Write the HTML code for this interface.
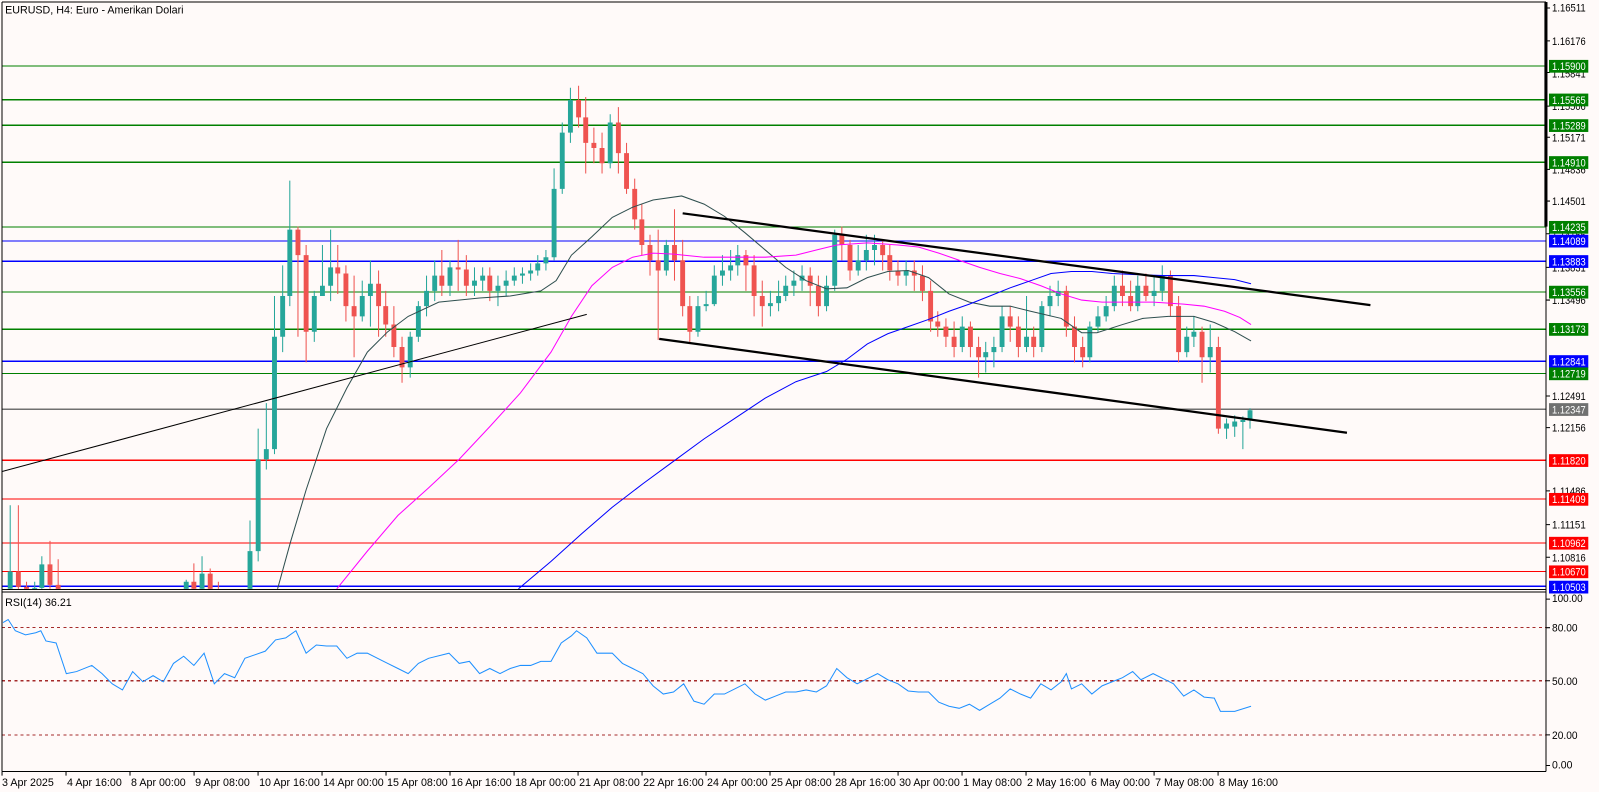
<!DOCTYPE html>
<html><head><meta charset="utf-8"><style>
html,body{margin:0;padding:0;background:#FFFAF9;overflow:hidden}
svg{display:block}
text{font-family:"Liberation Sans",sans-serif;font-size:10.5px;fill:#000}
.lb{fill:#fff}
</style></head><body>
<svg width="1599" height="792" viewBox="0 0 1567 776" preserveAspectRatio="none" xmlns="http://www.w3.org/2000/svg">
<defs><clipPath id="cm"><rect x="2" y="2" width="1513" height="575"/></clipPath>
<clipPath id="cr"><rect x="2" y="580" width="1513" height="176"/></clipPath></defs>
<rect width="1567" height="776" fill="#FFFAF9"/>
<g stroke-width="1.2" shape-rendering="crispEdges">
<line x1="2" x2="1515" y1="64.7" y2="64.7" stroke="#008000"/>
<line x1="2" x2="1515" y1="97.7" y2="97.7" stroke="#008000"/>
<line x1="2" x2="1515" y1="122.8" y2="122.8" stroke="#008000"/>
<line x1="2" x2="1515" y1="159" y2="159" stroke="#008000"/>
<line x1="2" x2="1515" y1="222.5" y2="222.5" stroke="#008000"/>
<line x1="2" x2="1515" y1="236" y2="236" stroke="#0000ff"/>
<line x1="2" x2="1515" y1="256" y2="256" stroke="#0000ff"/>
<line x1="2" x2="1515" y1="286" y2="286" stroke="#008000"/>
<line x1="2" x2="1515" y1="322.5" y2="322.5" stroke="#008000"/>
<line x1="2" x2="1515" y1="354" y2="354" stroke="#0000ff"/>
<line x1="2" x2="1515" y1="366" y2="366" stroke="#008000"/>
<line x1="2" x2="1515" y1="401" y2="401" stroke="#707070"/>
<line x1="2" x2="1515" y1="451" y2="451" stroke="#ff0000"/>
<line x1="2" x2="1515" y1="489" y2="489" stroke="#ff0000"/>
<line x1="2" x2="1515" y1="532" y2="532" stroke="#ff0000"/>
<line x1="2" x2="1515" y1="560" y2="560" stroke="#ff0000"/>
<line x1="2" x2="1515" y1="574.5" y2="574.5" stroke="#0000ff"/>
</g>
<g clip-path="url(#cm)">
<path fill="none" stroke="#26A69A" stroke-width="1" d="M10 495V577M34 570V585M41 545V580M182.5 568V600M198 545V580M245 510V600M253 420V550M261 395V460M269 290V445M277 260V345M284 177V300M308 285V335M316 240V290M324 225V295M355 275V315M363 255V320M402 325V370M410 295V335M418 270V310M426 255V295M441 255V290M465 262V290M473 262V285M488 270V300M496 265V290M504 262V280M512 262V278M520 258V275M527 250V270M535 245V265M543 165V255M551 120V190M559 86V140M598 112V165M653 235V270M684 290V330M692 285V305M700 260V300M708 250V280M716 245V275M723 240V270M755 285V310M763 275V305M770 270V295M778 265V290M786 260V285M810 270V305M818 225V285M841 240V270M849 230V265M857 230V260M888 255V280M943 310V345M966 335V365M974 330V360M982 300V345M1006 290V345M1021 295V345M1029 280V310M1037 275V300M1068 315V355M1076 300V325M1084 290V315M1092 270V305M1115 270V305M1131 270V300M1139 260V295M1163 320V350M1170 310V340M1186 318V365M1202 410V430M1210 407V428M1218 408V440M1225 400V420"/>
<path fill="#26A69A" d="M7.6 560h4.8V577h-4.8zM31.6 576h4.8V583h-4.8zM38.6 553h4.8V576h-4.8zM180.1 570h4.8V600h-4.8zM195.6 562h4.8V577h-4.8zM242.6 540h4.8V600h-4.8zM250.6 450h4.8V540h-4.8zM258.6 440h4.8V450h-4.8zM266.6 330h4.8V440h-4.8zM274.6 290h4.8V330h-4.8zM281.6 225h4.8V290h-4.8zM305.6 290h4.8V325h-4.8zM313.6 280h4.8V290h-4.8zM321.6 262h4.8V280h-4.8zM352.6 290h4.8V310h-4.8zM360.6 278h4.8V290h-4.8zM399.6 330h4.8V360h-4.8zM407.6 300h4.8V330h-4.8zM415.6 285h4.8V300h-4.8zM423.6 270h4.8V285h-4.8zM438.6 262h4.8V280h-4.8zM462.6 275h4.8V280h-4.8zM470.6 270h4.8V275h-4.8zM485.6 280h4.8V285h-4.8zM493.6 275h4.8V280h-4.8zM501.6 270h4.8V275h-4.8zM509.6 268h4.8V270h-4.8zM517.6 265h4.8V268h-4.8zM524.6 258h4.8V265h-4.8zM532.6 252h4.8V258h-4.8zM540.6 185h4.8V252h-4.8zM548.6 130h4.8V185h-4.8zM556.6 98h4.8V130h-4.8zM595.6 120h4.8V160h-4.8zM650.6 240h4.8V265h-4.8zM681.6 300h4.8V325h-4.8zM689.6 298h4.8V300h-4.8zM697.6 270h4.8V298h-4.8zM705.6 265h4.8V270h-4.8zM713.6 260h4.8V265h-4.8zM720.6 250h4.8V260h-4.8zM752.6 297h4.8V300h-4.8zM760.6 290h4.8V297h-4.8zM767.6 280h4.8V290h-4.8zM775.6 275h4.8V280h-4.8zM783.6 270h4.8V275h-4.8zM807.6 280h4.8V300h-4.8zM815.6 230h4.8V280h-4.8zM838.6 255h4.8V265h-4.8zM846.6 245h4.8V255h-4.8zM854.6 240h4.8V245h-4.8zM885.6 265h4.8V270h-4.8zM940.6 320h4.8V340h-4.8zM963.6 345h4.8V350h-4.8zM971.6 340h4.8V345h-4.8zM979.6 310h4.8V340h-4.8zM1003.6 330h4.8V340h-4.8zM1018.6 300h4.8V340h-4.8zM1026.6 290h4.8V300h-4.8zM1034.6 285h4.8V290h-4.8zM1065.6 320h4.8V350h-4.8zM1073.6 310h4.8V320h-4.8zM1081.6 300h4.8V310h-4.8zM1089.6 280h4.8V300h-4.8zM1112.6 280h4.8V300h-4.8zM1128.6 285h4.8V290h-4.8zM1136.6 270h4.8V285h-4.8zM1160.6 330h4.8V345h-4.8zM1167.6 325h4.8V330h-4.8zM1183.6 340h4.8V350h-4.8zM1199.6 415h4.8V420h-4.8zM1207.6 413h4.8V418h-4.8zM1215.6 411.5h4.8V413.5h-4.8zM1222.6 402h4.8V412h-4.8z"/>
<path fill="none" stroke="#EF5350" stroke-width="1" d="M18 495V578M26 570V585M49 530V577M57 548V600M190 552V580M206 557V580M214 570V600M292 222V330M300 240V355M331 240V288M339 260V315M347 270V350M371 265V330M378 285V330M386 300V350M394 330V375M433 245V290M449 235V285M457 250V290M480 262V295M567 84V125M574 95V170M582 125V160M590 130V170M606 105V170M614 140V190M622 175V225M629 200V250M637 230V270M645 225V333M661 205V275M669 235V310M676 290V335M731 245V285M739 250V310M747 275V320M794 262V300M802 270V310M825 222V255M833 235V275M865 235V265M872 240V275M880 255V280M896 255V285M904 260V295M912 275V325M919 305V330M927 312V340M935 315V350M951 315V350M959 330V370M990 300V335M998 310V350M1013 320V350M1045 280V330M1053 310V355M1061 330V360M1100 265V300M1108 275V305M1123 268V295M1147 265V310M1155 290V355M1178 320V375M1194 330V425"/>
<path fill="#EF5350" d="M15.6 560h4.8V575h-4.8zM23.6 575h4.8V583h-4.8zM46.6 553h4.8V573h-4.8zM54.6 573h4.8V593h-4.8zM187.6 570h4.8V577h-4.8zM203.6 562h4.8V578h-4.8zM211.6 580h4.8V600h-4.8zM289.6 225h4.8V250h-4.8zM297.6 250h4.8V325h-4.8zM328.6 262h4.8V268h-4.8zM336.6 268h4.8V300h-4.8zM344.6 300h4.8V310h-4.8zM368.6 278h4.8V300h-4.8zM375.6 300h4.8V318h-4.8zM383.6 318h4.8V340h-4.8zM391.6 340h4.8V360h-4.8zM430.6 270h4.8V280h-4.8zM446.6 262h4.8V264h-4.8zM454.6 264h4.8V280h-4.8zM477.6 270h4.8V285h-4.8zM564.6 98h4.8V115h-4.8zM571.6 115h4.8V140h-4.8zM579.6 140h4.8V145h-4.8zM587.6 145h4.8V160h-4.8zM603.6 120h4.8V150h-4.8zM611.6 150h4.8V185h-4.8zM619.6 185h4.8V215h-4.8zM626.6 215h4.8V240h-4.8zM634.6 240h4.8V255h-4.8zM642.6 255h4.8V265h-4.8zM658.6 240h4.8V255h-4.8zM666.6 255h4.8V300h-4.8zM673.6 300h4.8V325h-4.8zM728.6 250h4.8V260h-4.8zM736.6 260h4.8V290h-4.8zM744.6 290h4.8V300h-4.8zM791.6 270h4.8V280h-4.8zM799.6 280h4.8V300h-4.8zM822.6 230h4.8V240h-4.8zM830.6 240h4.8V265h-4.8zM862.6 240h4.8V250h-4.8zM869.6 250h4.8V265h-4.8zM877.6 265h4.8V270h-4.8zM893.6 265h4.8V270h-4.8zM901.6 270h4.8V285h-4.8zM909.6 285h4.8V315h-4.8zM916.6 315h4.8V320h-4.8zM924.6 320h4.8V330h-4.8zM932.6 330h4.8V340h-4.8zM948.6 320h4.8V340h-4.8zM956.6 340h4.8V350h-4.8zM987.6 310h4.8V320h-4.8zM995.6 320h4.8V340h-4.8zM1010.6 330h4.8V340h-4.8zM1042.6 285h4.8V320h-4.8zM1050.6 320h4.8V340h-4.8zM1058.6 340h4.8V350h-4.8zM1097.6 280h4.8V290h-4.8zM1105.6 290h4.8V300h-4.8zM1120.6 280h4.8V290h-4.8zM1144.6 270h4.8V300h-4.8zM1152.6 300h4.8V345h-4.8zM1175.6 325h4.8V350h-4.8zM1191.6 340h4.8V420h-4.8z"/>
</g>
<g clip-path="url(#cm)" fill="none">
<polyline stroke="#2F4F4F" stroke-width="1" points="272,577 285,530 300,480 320,420 340,380 360,345 380,325 400,310 430,296 470,292 500,290 530,285 545,275 560,250 580,232 600,213 620,203 640,196 668,192 690,200 710,212 730,228 750,245 770,262 790,275 810,283 830,282 850,272 870,266 890,265 910,272 930,288 950,296 970,300 990,300 1010,305 1040,312 1060,326 1075,326 1100,318 1120,312 1145,310 1170,310 1190,316 1210,325 1226,334"/>
<polyline stroke="#FF00FF" stroke-width="1" points="330,577 360,540 390,505 420,478 450,450 480,418 510,385 540,345 560,310 580,280 600,262 620,252 640,248 660,249 690,252 720,252 750,252 780,250 800,245 820,240 850,238 880,240 900,242 920,248 940,255 960,262 980,268 1000,273 1020,280 1040,288 1060,294 1080,296 1100,296 1130,296 1160,298 1180,300 1200,305 1215,311 1226,318"/>
<polyline stroke="#0000FF" stroke-width="1" points="508,577 540,550 570,523 600,497 630,474 660,452 690,430 720,410 750,390 780,374 810,364 830,352 850,337 870,327 890,320 910,313 930,305 950,298 970,290 990,282 1010,275 1030,268 1050,266 1070,266 1090,268 1110,269 1140,270 1170,270 1190,272 1210,274 1226,278"/>
<line x1="2" y1="462" x2="575" y2="308" stroke="#000" stroke-width="1"/>
<line x1="669" y1="209" x2="1343" y2="299" stroke="#000" stroke-width="2.2"/>
<line x1="646" y1="332" x2="1320" y2="424" stroke="#000" stroke-width="2.2"/>
</g>
<g stroke="#A52A2A" stroke-width="1" stroke-dasharray="3,3" shape-rendering="crispEdges">
<line x1="2" x2="1515" y1="615" y2="615"/><line x1="2" x2="1515" y1="667" y2="667"/><line x1="2" x2="1515" y1="720" y2="720"/>
</g>
<polyline clip-path="url(#cr)" fill="none" stroke="#1E90FF" stroke-width="1" points="3,610 8,607 15,618 25,622 35,620 40,618 45,628 55,630 65,660 75,658 90,652 100,660 110,670 120,676 130,658 140,668 150,662 160,668 170,650 180,643 190,652 200,640 210,670 220,660 230,664 240,645 260,638 270,627 280,625 290,618 300,640 310,632 320,633 330,633 340,645 350,640 360,640 370,645 380,650 390,655 400,660 410,650 420,645 440,640 450,650 460,648 470,660 480,655 490,660 500,655 510,652 520,652 530,648 540,648 550,630 560,623 565,618 575,625 585,640 600,640 610,650 620,655 630,660 640,672 650,680 660,678 670,670 680,687 690,690 700,680 710,680 720,675 730,670 740,680 750,686 760,682 770,678 780,678 790,676 800,678 810,672 820,655 830,664 840,670 850,665 860,660 870,666 880,670 890,677 900,678 910,678 920,688 930,692 940,694 950,690 960,696 970,690 980,684 990,675 1000,680 1010,684 1020,670 1030,676 1040,668 1045,660 1050,675 1060,670 1070,680 1080,672 1090,668 1100,664 1110,658 1118,666 1130,660 1140,665 1150,670 1160,682 1170,676 1180,683 1190,684 1196,697 1210,697 1226,692"/>
<g fill="none" stroke="#000" stroke-width="1" shape-rendering="crispEdges">
<line x1="2" y1="2" x2="1515" y2="2"/>
<line x1="2" y1="2" x2="2" y2="756"/>
<line x1="1515" y1="2" x2="1515" y2="756"/>
<line x1="2" y1="577.5" x2="1515" y2="577.5"/>
<line x1="2" y1="580" x2="1515" y2="580"/>
<line x1="2" y1="756" x2="1515" y2="756"/>
</g>
<rect x="1513.5" y="2" width="3" height="220" fill="#000"/>
<text x="5" y="13">EURUSD, H4:  Euro - Amerikan Dolari</text>
<text x="5" y="594">RSI(14) 36.21</text>
<path stroke="#000" stroke-width="1" d="M1515 7.8h4M1515 40h4M1515 71h4M1515 104h4M1515 134.5h4M1515 166h4M1515 197h4M1515 229h4M1515 262h4M1515 294h4M1515 388h4M1515 419h4M1515 481h4M1515 514h4M1515 546h4M1515 587h4M1515 615h4M1515 667h4M1515 720h4M1515 750h4"/>
<g>
<text x="1521" y="11.5" textLength="33" lengthAdjust="spacingAndGlyphs">1.16511</text>
<text x="1521" y="44" textLength="33" lengthAdjust="spacingAndGlyphs">1.16176</text>
<text x="1521" y="76" textLength="33" lengthAdjust="spacingAndGlyphs">1.15841</text>
<text x="1521" y="108" textLength="33" lengthAdjust="spacingAndGlyphs">1.15506</text>
<text x="1521" y="138.5" textLength="33" lengthAdjust="spacingAndGlyphs">1.15171</text>
<text x="1521" y="170" textLength="33" lengthAdjust="spacingAndGlyphs">1.14836</text>
<text x="1521" y="201" textLength="33" lengthAdjust="spacingAndGlyphs">1.14501</text>
<text x="1521" y="234" textLength="33" lengthAdjust="spacingAndGlyphs">1.14166</text>
<text x="1521" y="266" textLength="33" lengthAdjust="spacingAndGlyphs">1.13831</text>
<text x="1521" y="298" textLength="33" lengthAdjust="spacingAndGlyphs">1.13496</text>
<text x="1521" y="392" textLength="33" lengthAdjust="spacingAndGlyphs">1.12491</text>
<text x="1521" y="423" textLength="33" lengthAdjust="spacingAndGlyphs">1.12156</text>
<text x="1521" y="485" textLength="33" lengthAdjust="spacingAndGlyphs">1.11486</text>
<text x="1521" y="518" textLength="33" lengthAdjust="spacingAndGlyphs">1.11151</text>
<text x="1521" y="550" textLength="33" lengthAdjust="spacingAndGlyphs">1.10816</text>
<text x="1521" y="590" textLength="30" lengthAdjust="spacingAndGlyphs">100.00</text>
<text x="1521" y="619" textLength="25" lengthAdjust="spacingAndGlyphs">80.00</text>
<text x="1521" y="671" textLength="25" lengthAdjust="spacingAndGlyphs">50.00</text>
<text x="1521" y="724" textLength="25" lengthAdjust="spacingAndGlyphs">20.00</text>
<text x="1521" y="753" textLength="20" lengthAdjust="spacingAndGlyphs">0.00</text>
</g>
<g>
<rect x="1518" y="58.7" width="38.5" height="12.5" fill="#008000"/><text class="lb" x="1521" y="68.7" textLength="33" lengthAdjust="spacingAndGlyphs">1.15900</text>
<rect x="1518" y="91.7" width="38.5" height="12.5" fill="#008000"/><text class="lb" x="1521" y="101.7" textLength="33" lengthAdjust="spacingAndGlyphs">1.15565</text>
<rect x="1518" y="116.8" width="38.5" height="12.5" fill="#008000"/><text class="lb" x="1521" y="126.8" textLength="33" lengthAdjust="spacingAndGlyphs">1.15289</text>
<rect x="1518" y="153" width="38.5" height="12.5" fill="#008000"/><text class="lb" x="1521" y="163" textLength="33" lengthAdjust="spacingAndGlyphs">1.14910</text>
<rect x="1518" y="216.5" width="38.5" height="12.5" fill="#008000"/><text class="lb" x="1521" y="226.5" textLength="33" lengthAdjust="spacingAndGlyphs">1.14235</text>
<rect x="1518" y="230" width="38.5" height="12.5" fill="#0000ff"/><text class="lb" x="1521" y="240" textLength="33" lengthAdjust="spacingAndGlyphs">1.14089</text>
<rect x="1518" y="250" width="38.5" height="12.5" fill="#0000ff"/><text class="lb" x="1521" y="260" textLength="33" lengthAdjust="spacingAndGlyphs">1.13883</text>
<rect x="1518" y="280" width="38.5" height="12.5" fill="#008000"/><text class="lb" x="1521" y="290" textLength="33" lengthAdjust="spacingAndGlyphs">1.13556</text>
<rect x="1518" y="316.5" width="38.5" height="12.5" fill="#008000"/><text class="lb" x="1521" y="326.5" textLength="33" lengthAdjust="spacingAndGlyphs">1.13173</text>
<rect x="1518" y="348" width="38.5" height="12.5" fill="#0000ff"/><text class="lb" x="1521" y="358" textLength="33" lengthAdjust="spacingAndGlyphs">1.12841</text>
<rect x="1518" y="360" width="38.5" height="12.5" fill="#008000"/><text class="lb" x="1521" y="370" textLength="33" lengthAdjust="spacingAndGlyphs">1.12719</text>
<rect x="1518" y="395" width="38.5" height="12.5" fill="#707070"/><text class="lb" x="1521" y="405" textLength="33" lengthAdjust="spacingAndGlyphs">1.12347</text>
<rect x="1518" y="445" width="38.5" height="12.5" fill="#ff0000"/><text class="lb" x="1521" y="455" textLength="33" lengthAdjust="spacingAndGlyphs">1.11820</text>
<rect x="1518" y="483" width="38.5" height="12.5" fill="#ff0000"/><text class="lb" x="1521" y="493" textLength="33" lengthAdjust="spacingAndGlyphs">1.11409</text>
<rect x="1518" y="526" width="38.5" height="12.5" fill="#ff0000"/><text class="lb" x="1521" y="536" textLength="33" lengthAdjust="spacingAndGlyphs">1.10962</text>
<rect x="1518" y="554" width="38.5" height="12.5" fill="#ff0000"/><text class="lb" x="1521" y="564" textLength="33" lengthAdjust="spacingAndGlyphs">1.10670</text>
<rect x="1518" y="569" width="38.5" height="12.5" fill="#0000ff"/><text class="lb" x="1521" y="579" textLength="33" lengthAdjust="spacingAndGlyphs">1.10503</text>
</g>
<path stroke="#000" stroke-width="1" d="M2 756v4M64.7 756v4M127.4 756v4M190.2 756v4M252.9 756v4M315.6 756v4M378.3 756v4M441 756v4M503.8 756v4M566.5 756v4M629.2 756v4M691.9 756v4M754.6 756v4M817.4 756v4M880.1 756v4M942.8 756v4M1005.5 756v4M1068.2 756v4M1131 756v4M1193.7 756v4"/>
<g>
<text x="2" y="770">3 Apr 2025</text>
<text x="65.7" y="770">4 Apr 16:00</text>
<text x="128.4" y="770">8 Apr 00:00</text>
<text x="191.2" y="770">9 Apr 08:00</text>
<text x="253.9" y="770">10 Apr 16:00</text>
<text x="316.6" y="770">14 Apr 00:00</text>
<text x="379.3" y="770">15 Apr 08:00</text>
<text x="442" y="770">16 Apr 16:00</text>
<text x="504.8" y="770">18 Apr 00:00</text>
<text x="567.5" y="770">21 Apr 08:00</text>
<text x="630.2" y="770">22 Apr 16:00</text>
<text x="692.9" y="770">24 Apr 00:00</text>
<text x="755.6" y="770">25 Apr 08:00</text>
<text x="818.4" y="770">28 Apr 16:00</text>
<text x="881.1" y="770">30 Apr 00:00</text>
<text x="943.8" y="770">1 May 08:00</text>
<text x="1006.5" y="770">2 May 16:00</text>
<text x="1069.2" y="770">6 May 00:00</text>
<text x="1132" y="770">7 May 08:00</text>
<text x="1194.7" y="770">8 May 16:00</text>
</g>
</svg>
</body></html>
